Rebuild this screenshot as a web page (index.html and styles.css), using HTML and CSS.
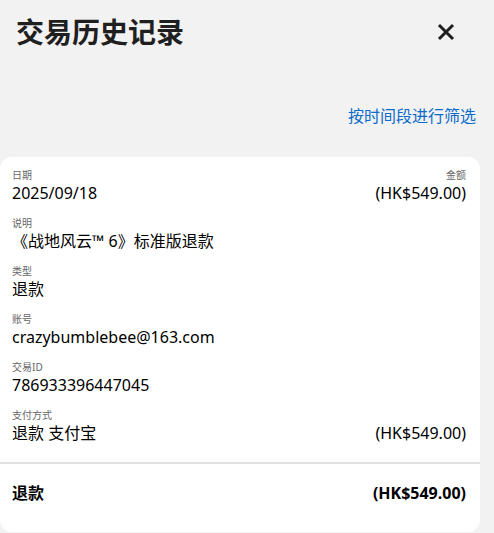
FILE: index.html
```html
<!DOCTYPE html>
<html lang="zh-CN">
<head>
<meta charset="utf-8">
<title>交易历史记录</title>
<link rel="stylesheet" href="styles.css">
</head>
<body>
<div class="page">
  <header class="header">
    <h1 class="title">交易历史记录</h1>
    <button class="close" aria-label="关闭">
      <svg width="18" height="18" viewBox="0 0 18 18"><path d="M2 2 L16 16 M16 2 L2 16" stroke="#1f1f1f" stroke-width="3" stroke-linecap="butt" fill="none"/></svg>
    </button>
  </header>
  <div class="filter-row">
    <a class="filter" href="#">按时间段进行筛选</a>
  </div>
  <section class="card">
    <div class="details">
      <div class="row">
        <div class="field">
          <div class="label">日期</div>
          <div class="value">2025/09/18</div>
        </div>
        <div class="field right">
          <div class="label">金额</div>
          <div class="value">(HK$549.00)</div>
        </div>
      </div>
      <div class="field">
        <div class="label">说明</div>
        <div class="value">《战地风云™ 6》标准版退款</div>
      </div>
      <div class="field">
        <div class="label">类型</div>
        <div class="value">退款</div>
      </div>
      <div class="field">
        <div class="label">账号</div>
        <div class="value">crazybumblebee@163.com</div>
      </div>
      <div class="field">
        <div class="label">交易ID</div>
        <div class="value">786933396447045</div>
      </div>
      <div class="row">
        <div class="field">
          <div class="label">支付方式</div>
          <div class="value">退款 支付宝</div>
        </div>
        <div class="field right">
          <div class="value">(HK$549.00)</div>
        </div>
      </div>
    </div>
    <div class="total">
      <span>退款</span>
      <span>(HK$549.00)</span>
    </div>
  </section>
</div>
</body>
</html>
```

FILE: styles.css
```css
* { box-sizing: border-box; }
html, body {
  margin: 0;
  padding: 0;
  background: #f2f2f2;
}
body {
  font-family: "Noto Sans", "Noto Sans CJK SC", sans-serif;
  color: #000;
}
.page {
  width: 494px;
  height: 533px;
  overflow: hidden;
}
.header {
  display: flex;
  justify-content: space-between;
  align-items: center;
  padding: 12px 39px 0 16px;
}
.title {
  margin: 0;
  font-size: 28px;
  line-height: 40px;
  font-weight: 700;
  color: #1f1f1f;
}
.close {
  border: 0;
  background: none;
  padding: 0;
  width: 18px;
  height: 18px;
  display: flex;
}
.filter-row {
  display: flex;
  justify-content: flex-end;
  padding: 52px 18px 0 0;
}
.filter {
  font-size: 16px;
  line-height: 24px;
  color: #0b6bcb;
  text-decoration: none;
}
.card {
  margin-top: 29px;
  width: 480px;
  height: 375px;
  background: #fff;
  border-radius: 12px;
}
.details {
  display: flex;
  flex-direction: column;
  gap: 12px;
  padding: 11px 14px 18px 12px;
  border-bottom: 2px solid #e0e0e0;
}
.row {
  display: flex;
  justify-content: space-between;
  align-items: flex-end;
}
.field.right { text-align: right; }
.label {
  font-size: 10px;
  line-height: 14px;
  color: #666;
}
.value {
  font-size: 16px;
  line-height: 22px;
  color: #000;
}
.total {
  display: flex;
  justify-content: space-between;
  padding: 18px 14px 0 12px;
  font-size: 16px;
  line-height: 22px;
  font-weight: 700;
}
```
